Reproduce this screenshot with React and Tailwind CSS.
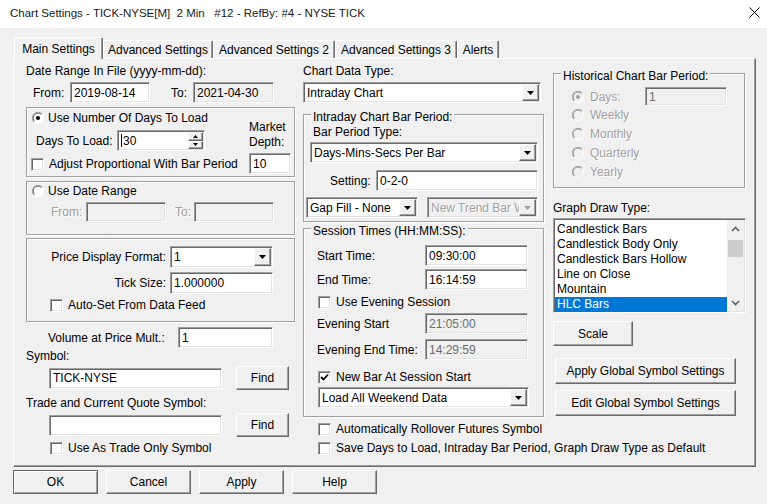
const sunken =
  "border border-t-[#a0a0a0] border-l-[#a0a0a0] border-r-white border-b-white shadow-[inset_1px_1px_0_#696969,inset_-1px_-1px_0_#e3e3e3]";
const raised =
  "border border-t-white border-l-white border-r-[#696969] border-b-[#696969] shadow-[inset_-1px_-1px_0_#a0a0a0]";
const etched = "border border-[#a0a0a0] shadow-[inset_1px_1px_0_#fff,1px_1px_0_#fff]";
const grayText = "text-[#a0a0a0] [text-shadow:1px_1px_0_#fff]";

function TextBox({ className = "", children, tone = "white" }) {
  const tones = {
    white: "bg-white text-black",
    read: "bg-[#f0f0f0] text-black",
    off: "bg-[#f0f0f0] text-[#6d6d6d]",
  };
  return (
    <div
      className={`${sunken} ${tones[tone]} flex shrink-0 items-center overflow-hidden whitespace-nowrap pl-[3px] ${className}`}
    >
      {children}
    </div>
  );
}

function Arrow({ off }) {
  return (
    <svg width="7" height="4" viewBox="0 0 7 4">
      <polygon points="0,0 7,0 3.5,4" fill={off ? "#a0a0a0" : "#000"} />
    </svg>
  );
}

function Select({ className = "", value, off }) {
  return (
    <div className={`${sunken} ${off ? "bg-[#f0f0f0]" : "bg-white"} flex shrink-0 items-stretch p-[1px] ${className}`}>
      <div
        className={`flex flex-1 items-center overflow-hidden whitespace-nowrap pl-[2px] ${off ? grayText : "text-black"}`}
      >
        {value}
      </div>
      <div className={`${raised} flex w-[17px] shrink-0 items-center justify-center bg-[#f0f0f0]`}>
        <Arrow off={off} />
      </div>
    </div>
  );
}

function Check({ checked, label, className = "" }) {
  return (
    <div className={`flex h-[14px] items-center whitespace-nowrap ${className}`}>
      <span className={`${sunken} flex h-[13px] w-[13px] shrink-0 items-center justify-center bg-white`}>
        {checked ? (
          <svg width="9" height="9" viewBox="0 0 9 9">
            <polyline points="1,4 3.5,6.5 8,1.5" fill="none" stroke="#000" strokeWidth="1.8" />
          </svg>
        ) : null}
      </span>
      <span className="ml-[5px]">{label}</span>
    </div>
  );
}

function Radio({ checked, off }) {
  return (
    <svg width="12" height="12" viewBox="0 0 12 12" className="shrink-0">
      <circle cx="6" cy="6" r="5.5" fill={off ? "#f0f0f0" : "#fff"} stroke="#fff" />
      <path d="M1.9 10.1 A5.6 5.6 0 0 1 10.1 1.9" fill="none" stroke="#a0a0a0" />
      <path d="M2.6 9.4 A4.6 4.6 0 0 1 9.4 2.6" fill="none" stroke={off ? "#a0a0a0" : "#696969"} />
      {checked ? <circle cx="6" cy="6" r="2" fill={off ? "#a0a0a0" : "#000"} /> : null}
    </svg>
  );
}

function RadioRow({ checked, off, label, className = "", gap = "ml-[4px]" }) {
  return (
    <div className={`flex h-[14px] items-center whitespace-nowrap ${className}`}>
      <Radio checked={checked} off={off} />
      <span className={`${gap} ${off ? grayText : ""}`}>{label}</span>
    </div>
  );
}

function Button({ className = "", children }) {
  return (
    <div className={`${raised} flex shrink-0 items-center justify-center bg-[#f0f0f0] ${className}`}>
      {children}
    </div>
  );
}

function Group({ title, className = "", children }) {
  return (
    <div className={`${etched} relative flex flex-col ${className}`}>
      {title ? (
        <span className="absolute -top-[5px] left-[7px] whitespace-nowrap bg-[#f0f0f0] px-[2px] leading-[14px]">
          {title}
        </span>
      ) : null}
      {children}
    </div>
  );
}

function Chevron({ up }) {
  return (
    <svg width="9" height="6" viewBox="0 0 9 6">
      <polyline
        points={up ? "1,5 4.5,1.5 8,5" : "1,1 4.5,4.5 8,1"}
        fill="none"
        stroke="#606060"
        strokeWidth="1.6"
      />
    </svg>
  );
}

const drawTypes = [
  "Candlestick Bars",
  "Candlestick Body Only",
  "Candlestick Bars Hollow",
  "Line on Close",
  "Mountain",
  "HLC Bars",
];

const tabs = [
  { label: "Advanced Settings", w: "w-[110px]" },
  { label: "Advanced Settings 2", w: "w-[122px]" },
  { label: "Advanced Settings 3", w: "w-[122px]" },
  { label: "Alerts", w: "w-[42px]" },
];

export default function App() {
  return (
    <div className="flex h-[504px] w-[767px] flex-col overflow-hidden bg-[#f0f0f0] font-['Liberation_Sans',Arial,sans-serif] text-[12px] leading-[14px] text-black">
      {/* title bar */}
      <div className="flex h-[28px] shrink-0 items-start justify-between bg-white pl-[10px] pr-[7px] pt-[6px]">
        <span className="whitespace-pre text-[11.5px] text-[#1a1a1a]">
          Chart Settings - TICK-NYSE[M]  2 Min   #12 - RefBy: #4 - NYSE TICK
        </span>
        <svg width="11" height="11" viewBox="0 0 11 11" className="mt-[1px]">
          <path d="M0.5 0.5 L10.5 10.5 M10.5 0.5 L0.5 10.5" stroke="#000" strokeWidth="1" />
        </svg>
      </div>

      {/* tabs */}
      <div className="relative z-10 -mb-[1px] ml-[14px] mt-[9px] flex h-[22px] items-end">
        <div className="flex h-[22px] w-[89px] items-start justify-center rounded-t-[2px] border-l border-t border-r border-l-white border-t-white border-r-[#696969] bg-[#f0f0f0] pt-[4px] shadow-[inset_-1px_0_0_#a0a0a0]">
          Main Settings
        </div>
        {tabs.map((tab) => (
          <div
            key={tab.label}
            className={`mb-[1px] flex h-[18px] ${tab.w} items-center justify-center whitespace-nowrap rounded-t-[2px] border-l border-t border-r border-l-white border-t-white border-r-[#696969] bg-[#f0f0f0] shadow-[inset_-1px_0_0_#a0a0a0]`}
          >
            {tab.label}
          </div>
        ))}
      </div>

      {/* tab panel */}
      <div className="ml-[13px] flex h-[409px] w-[743px] shrink-0 border border-l-white border-t-white border-r-[#696969] border-b-[#696969] pl-[12px] shadow-[inset_-1px_-1px_0_#a0a0a0]">
        {/* left column */}
        <div className="flex w-[269px] shrink-0 flex-col">
          <div className="mt-[5px] h-[14px]">Date Range In File (yyyy-mm-dd):</div>
          <div className="mt-[4px] flex h-[21px] items-center pl-[7px]">
            <span className="w-[37px]">From:</span>
            <TextBox className="h-[21px] w-[80px]">2019-08-14</TextBox>
            <span className="ml-[21px] w-[22px]">To:</span>
            <TextBox tone="read" className="h-[21px] w-[81px]">
              2021-04-30
            </TextBox>
          </div>

          <Group className="mt-[4px] h-[70px] !flex-row">
            <div className="flex flex-1 flex-col pl-[5px] pt-[3px]">
              <RadioRow checked label="Use Number Of Days To Load" />
              <div className="mt-[5px] flex h-[21px] items-center">
                <span className="ml-[4px] w-[81px]">Days To Load:</span>
                <TextBox className="h-[21px] w-[88px] !pr-[1px]">
                  <span className="mr-[1px] h-[13px] w-[1px] bg-black" />
                  <span className="flex-1">30</span>
                  <div className="flex h-full w-[15px] flex-col py-[1px]">
                    <div className={`${raised} flex flex-1 items-center justify-center bg-[#f0f0f0]`}>
                      <svg width="5" height="3" viewBox="0 0 5 3">
                        <polygon points="0,3 5,3 2.5,0" fill="#000" />
                      </svg>
                    </div>
                    <div className={`${raised} flex flex-1 items-center justify-center bg-[#f0f0f0]`}>
                      <svg width="5" height="3" viewBox="0 0 5 3">
                        <polygon points="0,0 5,0 2.5,3" fill="#000" />
                      </svg>
                    </div>
                  </div>
                </TextBox>
              </div>
              <Check className="-ml-[1px] mt-[6px]" label="Adjust Proportional With Bar Period" />
            </div>
            <div className="mr-[3px] flex w-[42px] flex-col pt-[12px]">
              <span className="leading-[15px]">Market</span>
              <span className="leading-[15px]">Depth:</span>
              <TextBox className="mt-[3px] h-[21px] w-[42px]">10</TextBox>
            </div>
          </Group>

          <Group className="mt-[4px] h-[54px] pl-[5px] pt-[2px]">
            <RadioRow label="Use Date Range" />
            <div className="mt-[4px] flex h-[20px] items-center">
              <span className={`ml-[19px] w-[35px] ${grayText}`}>From:</span>
              <TextBox tone="off" className="h-[20px] w-[80px]" />
              <span className={`ml-[9px] w-[19px] ${grayText}`}>To:</span>
              <TextBox tone="off" className="h-[20px] w-[80px]" />
            </div>
          </Group>

          <Group className="mt-[3px] h-[84px] pt-[7px]">
            <div className="flex h-[22px] items-center">
              <span className="w-[139px] text-right">Price Display Format:</span>
              <Select className="ml-[4px] h-[22px] w-[103px]" value="1" />
            </div>
            <div className="mt-[4px] flex h-[22px] items-center">
              <span className="w-[139px] text-right">Tick Size:</span>
              <TextBox className="ml-[4px] h-[22px] w-[103px]">1.000000</TextBox>
            </div>
            <Check className="ml-[23px] mt-[4px]" label="Auto-Set From Data Feed" />
          </Group>

          <div className="mt-[5px] flex h-[21px] items-center pl-[22px]">
            <span className="w-[130px]">Volume at Price Mult.:</span>
            <TextBox className="h-[21px] w-[95px]">1</TextBox>
          </div>
          <div className="mt-[1px] h-[14px]">Symbol:</div>
          <div className="mt-[3px] flex h-[24px] items-center pl-[23px]">
            <TextBox className="h-[21px] w-[173px]">TICK-NYSE</TextBox>
            <Button className="ml-[14px] h-[24px] w-[53px]">Find</Button>
          </div>
          <div className="mt-[6px] h-[14px]">Trade and Current Quote Symbol:</div>
          <div className="mt-[3px] flex h-[24px] items-center pl-[23px]">
            <TextBox className="h-[21px] w-[173px]" />
            <Button className="ml-[14px] h-[24px] w-[53px]">Find</Button>
          </div>
          <Check className="ml-[24px] mt-[4px]" label="Use As Trade Only Symbol" />
        </div>

        {/* middle column */}
        <div className="ml-[8px] flex w-[241px] shrink-0 flex-col">
          <div className="mt-[5px] h-[14px]">Chart Data Type:</div>
          <Select className="mt-[4px] h-[21px] w-[238px]" value="Intraday Chart" />

          <Group title="Intraday Chart Bar Period:" className="mt-[11px] h-[108px] pt-[10px]">
            <div className="h-[14px] pl-[9px]">Bar Period Type:</div>
            <Select className="ml-[6px] mt-[3px] h-[21px] w-[228px]" value="Days-Mins-Secs Per Bar" />
            <div className="mt-[7px] flex h-[21px] items-center">
              <span className="ml-[26px] w-[46px]">Setting:</span>
              <TextBox className="h-[21px] w-[162px]">0-2-0</TextBox>
            </div>
            <div className="mt-[6px] flex h-[21px] items-center">
              <Select className="ml-[2px] h-[21px] w-[112px]" value="Gap Fill - None" />
              <Select off className="ml-[9px] h-[21px] w-[111px]" value="New Trend Bar W" />
            </div>
          </Group>

          <Group title="Session Times (HH:MM:SS):" className="mt-[6px] h-[189px] pt-[16px]">
            <div className="flex h-[21px] items-center">
              <span className="ml-[13px] w-[108px]">Start Time:</span>
              <TextBox className="h-[21px] w-[103px]">09:30:00</TextBox>
            </div>
            <div className="mt-[3px] flex h-[21px] items-center">
              <span className="ml-[13px] w-[108px]">End Time:</span>
              <TextBox className="h-[21px] w-[103px]">16:14:59</TextBox>
            </div>
            <Check className="ml-[14px] mt-[5px]" label="Use Evening Session" />
            <div className="mt-[4px] flex h-[21px] items-center">
              <span className="ml-[13px] w-[108px]">Evening Start</span>
              <TextBox tone="off" className="h-[21px] w-[103px]">
                21:05:00
              </TextBox>
            </div>
            <div className="mt-[5px] flex h-[21px] items-center">
              <span className="ml-[13px] w-[108px]">Evening End Time:</span>
              <TextBox tone="off" className="h-[21px] w-[103px]">
                14:29:59
              </TextBox>
            </div>
            <Check checked className="ml-[14px] mt-[10px]" label="New Bar At Session Start" />
            <Select className="ml-[14px] mt-[3px] h-[21px] w-[211px]" value="Load All Weekend Data" />
          </Group>

          <Check className="ml-[15px] mt-[5px]" label="Automatically Rollover Futures Symbol" />
          <Check
            className="ml-[15px] mt-[5px]"
            label="Save Days to Load, Intraday Bar Period, Graph Draw Type as Default"
          />
        </div>

        {/* right column */}
        <div className="ml-[9px] flex w-[193px] shrink-0 flex-col">
          <Group title="Historical Chart Bar Period:" className="mt-[14px] h-[115px] w-[192px] pt-[13px]">
            <div className="flex h-[19px] items-center pl-[18px]">
              <Radio checked off />
              <span className={`ml-[6px] w-[55px] ${grayText}`}>Days:</span>
              <TextBox tone="off" className="h-[19px] w-[82px]">
                1
              </TextBox>
            </div>
            <RadioRow off gap="ml-[6px]" className="mt-[2px] pl-[18px]" label="Weekly" />
            <RadioRow off gap="ml-[6px]" className="mt-[5px] pl-[18px]" label="Monthly" />
            <RadioRow off gap="ml-[6px]" className="mt-[5px] pl-[18px]" label="Quarterly" />
            <RadioRow off gap="ml-[6px]" className="mt-[5px] pl-[18px]" label="Yearly" />
          </Group>

          <div className="mt-[13px] h-[14px]">Graph Draw Type:</div>
          <div className={`${sunken} mt-[3px] flex h-[95px] w-[193px] bg-white p-[1px]`}>
            <div className="flex flex-1 flex-col pt-[2px]">
              {drawTypes.map((item) => (
                <div
                  key={item}
                  className={`h-[15px] pl-[2px] leading-[15px] ${item === "HLC Bars" ? "bg-[#0078d7] text-white" : ""}`}
                >
                  {item}
                </div>
              ))}
            </div>
            <div className="flex w-[17px] flex-col bg-[#f0f0f0]">
              <div className="flex h-[17px] items-center justify-center">
                <Chevron up />
              </div>
              <div className="mx-[1px] mt-[3px] h-[17px] bg-[#cdcdcd]" />
              <div className="flex-1" />
              <div className="flex h-[17px] items-center justify-center">
                <Chevron />
              </div>
            </div>
          </div>

          <Button className="mt-[8px] h-[25px] w-[80px]">Scale</Button>
          <Button className="ml-[2px] mt-[12px] h-[26px] w-[181px]">Apply Global Symbol Settings</Button>
          <Button className="ml-[2px] mt-[6px] h-[26px] w-[181px]">Edit Global Symbol Settings</Button>
        </div>
      </div>

      {/* dialog buttons */}
      <div className="ml-[13px] mt-[3px] flex gap-[8px]">
        <Button className="h-[24px] w-[85px] !border-[#646464] shadow-[inset_1px_1px_0_#fff,inset_-1px_-1px_0_#a0a0a0]">
          OK
        </Button>
        <Button className="h-[24px] w-[85px]">Cancel</Button>
        <Button className="h-[24px] w-[85px]">Apply</Button>
        <Button className="h-[24px] w-[85px]">Help</Button>
      </div>
    </div>
  );
}
